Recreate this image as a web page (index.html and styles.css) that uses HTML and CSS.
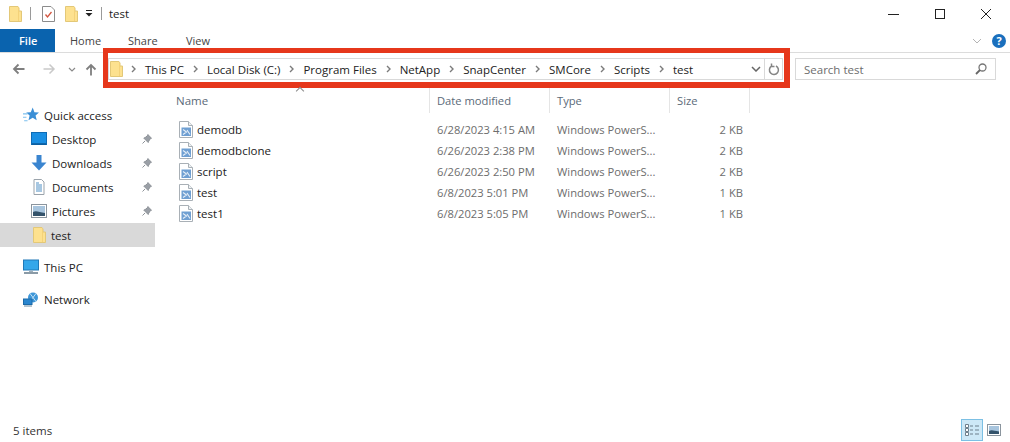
FILE: index.html
```html
<!DOCTYPE html>
<html lang="en">
<head>
<meta charset="utf-8">
<title>test</title>
<link rel="stylesheet" href="styles.css">
</head>
<body>
<svg class="defs" width="0" height="0" aria-hidden="true">
  <symbol id="folder" viewBox="0 0 13 16">
    <path d="M.5.5h8.500l1 1.500v3h2.500v10.500H.5z" fill="#fde18f" stroke="#e3c878"/>
    <path d="M9.500 1.500v13.500" stroke="#f4d27a" fill="none"/>
  </symbol>
  <symbol id="ps" viewBox="0 0 14 17">
    <path d="M.5.500h9l4 4v12H.5z" fill="#fff" stroke="#a9b0b6"/>
    <path d="M9.500.500v4h4" fill="#eef1f3" stroke="#a9b0b6"/>
    <rect x="2.500" y="6.500" width="9.500" height="8.500" fill="#6f9fd2"/>
    <path d="M4 8.500l3.500 2.500-3.500 2.500M8 9l3 4.500" fill="none" stroke="#e8f0f8" stroke-width="1.100"/>
  </symbol>
  <symbol id="pin" viewBox="0 0 10 10">
    <path d="M5.800.5l3.700 3.700-1.200.5-1.600 2.500-.5 1.300-4.400-4.400 1.300-.5 2.200-1.700zM3 7L.5 9.500" fill="#9a9fa6" stroke="#8d9298"/>
  </symbol>
  <symbol id="chev" viewBox="0 0 6 8">
    <path d="M1 1l3 3-3 3" fill="none" stroke="#7b7b7b" stroke-width="1.400"/>
  </symbol>
</svg>

<div class="window">
  <header class="titlebar">
    <svg class="qa-folder"><use href="#folder"/></svg>
    <span class="qa-sep"></span>
    <svg class="qa-doc" viewBox="0 0 13 16">
      <path d="M.5.500h8.500l3.500 3.500v11.500H.5z" fill="#fff" stroke="#8c8c8c"/>
      <path d="M3.500 8.500l2 2.500 4-5" fill="none" stroke="#d2553f" stroke-width="1.300"/>
    </svg>
    <svg class="qa-folder second"><use href="#folder"/></svg>
    <svg class="qa-drop" viewBox="0 0 8 7">
      <path d="M1 .5h6" stroke="#222" fill="none"/>
      <path d="M.5 3h7L4 6.500z" fill="#222"/>
    </svg>
    <span class="qa-sep last"></span>
    <span class="title-text">test</span>
    <div class="winctrls">
      <svg class="ctl" viewBox="0 0 12 12"><path d="M0 6.500h11" stroke="#222" fill="none"/></svg>
      <svg class="ctl" viewBox="0 0 12 12"><rect x="1.500" y="1.500" width="9" height="9" fill="none" stroke="#222"/></svg>
      <svg class="ctl" viewBox="0 0 12 12"><path d="M1 1l10 10M11 1L1 11" stroke="#222" fill="none"/></svg>
    </div>
  </header>

  <nav class="ribbon">
    <span class="tab tab-file">File</span>
    <span class="tab">Home</span>
    <span class="tab">Share</span>
    <span class="tab">View</span>
    <span class="ribbon-end">
      <svg class="rib-chev" viewBox="0 0 10 6"><path d="M1 1l4 4 4-4" fill="none" stroke="#b4b4b4"/></svg>
      <span class="help">?</span>
    </span>
  </nav>

  <div class="addressrow">
    <div class="navbtns">
      <svg class="arrow" viewBox="0 0 13 12"><path d="M12.500 6H2M6.500 1.500L2 6l4.500 4.500" fill="none" stroke="#7f7f7f" stroke-width="1.800"/></svg>
      <svg class="arrow fwd" viewBox="0 0 13 12"><path d="M.5 6H11M6.500 1.500L11 6l-4.500 4.500" fill="none" stroke="#c9c9c9" stroke-width="1.500"/></svg>
      <svg class="arrow-down" viewBox="0 0 8 5"><path d="M1 1l3 3 3-3" fill="none" stroke="#8a8a8a" stroke-width="1.200"/></svg>
      <svg class="arrow up" viewBox="0 0 12 13"><path d="M6 12.500V2M1.500 6.500L6 2l4.500 4.500" fill="none" stroke="#7f7f7f" stroke-width="1.800"/></svg>
    </div>
    <div class="addressbox">
      <svg class="crumb-folder"><use href="#folder"/></svg>
      <svg class="crumb-chev"><use href="#chev"/></svg><span class="crumb">This PC</span>
      <svg class="crumb-chev"><use href="#chev"/></svg><span class="crumb">Local Disk (C:)</span>
      <svg class="crumb-chev"><use href="#chev"/></svg><span class="crumb">Program Files</span>
      <svg class="crumb-chev"><use href="#chev"/></svg><span class="crumb">NetApp</span>
      <svg class="crumb-chev"><use href="#chev"/></svg><span class="crumb">SnapCenter</span>
      <svg class="crumb-chev"><use href="#chev"/></svg><span class="crumb">SMCore</span>
      <svg class="crumb-chev"><use href="#chev"/></svg><span class="crumb">Scripts</span>
      <svg class="crumb-chev"><use href="#chev"/></svg><span class="crumb">test</span>
      <span class="addr-end">
        <svg class="addr-drop" viewBox="0 0 10 6"><path d="M1 1l4 4 4-4" fill="none" stroke="#666" stroke-width="1.500"/></svg>
        <span class="addr-refresh">
          <svg viewBox="0 0 12 13"><path d="M8 3a4.500 4.500 0 1 1-4.500.2M3.500 .5v3h3" fill="none" stroke="#858585" stroke-width="1.500"/></svg>
        </span>
      </span>
    </div>
    <div class="searchbox">
      <span class="search-ph">Search test</span>
      <svg class="search-ic" viewBox="0 0 12 12"><circle cx="7.500" cy="4.500" r="3.500" fill="none" stroke="#777" stroke-width="1.300"/><path d="M5 7l-4 4" stroke="#666" stroke-width="1.800" fill="none"/></svg>
    </div>
    <div class="highlight"></div>
  </div>

  <main class="content">
    <aside class="sidebar">
      <div class="nav-item root first">
        <svg class="nav-ic star" viewBox="0 0 14 14"><path d="M8.500 .5l1.500 4 4 .3-3 2.700 1 4.200-3.500-2.200-3.700 2.200 1-4.200-3-2.700 4-.3z" fill="#3b8fd6"/><path d="M0 6h4M0 9h3M1 12h3" stroke="#7cc0ee"/></svg>
        <span>Quick access</span>
      </div>
      <div class="nav-item sub">
        <svg class="nav-ic" viewBox="0 0 16 14"><rect x=".5" y=".5" width="15" height="12" fill="#1a8fe3" stroke="#0f6cb5"/><path d="M1 12h14" stroke="#0b5a9a" stroke-width="1.500"/></svg>
        <span class="nav-label">Desktop</span>
        <svg class="pin"><use href="#pin"/></svg>
      </div>
      <div class="nav-item sub">
        <svg class="nav-ic" viewBox="0 0 16 16"><path d="M5.500 0h5v7.500h5L8 15.500.5 7.500h5z" fill="#3a85d0"/></svg>
        <span class="nav-label">Downloads</span>
        <svg class="pin"><use href="#pin"/></svg>
      </div>
      <div class="nav-item sub">
        <svg class="nav-ic" viewBox="0 0 16 16"><path d="M3 .5h7.500L13 3v12.500H3z" fill="#fff" stroke="#9aa3ab"/><path d="M5 4h3M5 6h6M5 8h6M5 10h6M5 12h6" stroke="#4e8fc4"/></svg>
        <span class="nav-label">Documents</span>
        <svg class="pin"><use href="#pin"/></svg>
      </div>
      <div class="nav-item sub">
        <svg class="nav-ic" viewBox="0 0 16 14"><rect x=".5" y=".5" width="15" height="13" fill="#fff" stroke="#8b959e"/><rect x="2" y="2" width="12" height="10" fill="#a8c5de"/><path d="M2 8c3-2 6 0 12 1v3H2z" fill="#34536b"/></svg>
        <span class="nav-label">Pictures</span>
        <svg class="pin"><use href="#pin"/></svg>
      </div>
      <div class="nav-item sub selected">
        <svg class="nav-ic folder-ic"><use href="#folder"/></svg>
        <span class="nav-label">test</span>
      </div>
      <div class="nav-item root spaced">
        <svg class="nav-ic" viewBox="0 0 16 15"><rect x=".5" y=".5" width="15" height="10" fill="#35a7ea" stroke="#2079b8"/><path d="M1 13.500h14" stroke="#8a9aa6" stroke-width="2"/><path d="M6 11h4v1.500H6z" fill="#9fb0bc"/></svg>
        <span>This PC</span>
      </div>
      <div class="nav-item root spaced">
        <svg class="nav-ic" viewBox="0 0 16 15"><circle cx="10" cy="6" r="5" fill="#3f97d8"/><path d="M7 2l6 8M13 2L7 10" stroke="#bfe0f5"/><rect x=".5" y="7.500" width="8.500" height="5.500" fill="#2a86cf" stroke="#1c6aa8"/><path d="M1 14.500h8" stroke="#6a8aa0"/></svg>
        <span>Network</span>
      </div>
    </aside>

    <section class="files">
      <div class="row header">
        <span class="cell name">Name</span>
        <span class="cell">Date modified</span>
        <span class="cell">Type</span>
        <span class="cell">Size</span>
        <span class="sort-caret"></span>
      </div>
      <div class="rows">
        <div class="row file">
          <span class="cell name"><svg class="file-ic"><use href="#ps"/></svg><span class="fname">demodb</span></span>
          <span class="cell">6/28/2023 4:15 AM</span>
          <span class="cell">Windows PowerS...</span>
          <span class="cell size">2 KB</span>
        </div>
        <div class="row file">
          <span class="cell name"><svg class="file-ic"><use href="#ps"/></svg><span class="fname">demodbclone</span></span>
          <span class="cell">6/26/2023 2:38 PM</span>
          <span class="cell">Windows PowerS...</span>
          <span class="cell size">2 KB</span>
        </div>
        <div class="row file">
          <span class="cell name"><svg class="file-ic"><use href="#ps"/></svg><span class="fname">script</span></span>
          <span class="cell">6/26/2023 2:50 PM</span>
          <span class="cell">Windows PowerS...</span>
          <span class="cell size">2 KB</span>
        </div>
        <div class="row file">
          <span class="cell name"><svg class="file-ic"><use href="#ps"/></svg><span class="fname">test</span></span>
          <span class="cell">6/8/2023 5:01 PM</span>
          <span class="cell">Windows PowerS...</span>
          <span class="cell size">1 KB</span>
        </div>
        <div class="row file">
          <span class="cell name"><svg class="file-ic"><use href="#ps"/></svg><span class="fname">test1</span></span>
          <span class="cell">6/8/2023 5:05 PM</span>
          <span class="cell">Windows PowerS...</span>
          <span class="cell size">1 KB</span>
        </div>
      </div>
    </section>
  </main>

  <footer class="statusbar">
    <span class="count">5 items</span>
    <span class="views">
      <span class="view-btn active">
        <svg viewBox="0 0 16 14"><path d="M1.500 1.500h3v3h-3zM1.500 5.500h3v3h-3zM1.500 9.500h3v3h-3z" fill="#fff" stroke="#6d7f8c"/><path d="M6 3h3M11 3h4M6 7h3M11 7h4M6 11h3M11 11h4" stroke="#6d7f8c"/></svg>
      </span>
      <span class="view-btn">
        <svg viewBox="0 0 14 12"><rect x=".5" y=".5" width="13" height="11" fill="#fff" stroke="#8b959e"/><rect x="2" y="2" width="10" height="8" fill="#a8c5de"/><path d="M2 7c3-1.500 5 0 10 .5V10H2z" fill="#34536b"/></svg>
      </span>
    </span>
  </footer>
</div>
</body>
</html>
```

FILE: styles.css
```css
* { box-sizing: border-box; }

html, body {
  margin: 0;
  height: 100%;
  background: #fff;
}

body {
  font-family: "Open Sans", "Noto Sans", sans-serif;
  font-size: 11.500px;
  color: #1c1c1c;
  overflow: hidden;
}

.defs { position: absolute; }

svg { display: block; flex: none; }

.window {
  width: 1010px;
  height: 442px;
  display: flex;
  flex-direction: column;
}

/* Title bar */
.titlebar {
  height: 29px;
  display: flex;
  align-items: center;
  padding: 0 0 2px 9px;
}
.qa-folder { width: 13px; height: 16px; }
.qa-folder.second { margin-left: 10px; }
.qa-sep { width: 1px; height: 13px; background: #9a9a9a; margin-left: 8px; }
.qa-sep.last { margin-left: 8px; }
.qa-doc { width: 13px; height: 16px; margin-left: 11px; }
.qa-drop { width: 8px; height: 7px; margin-left: 7px; }
.title-text { margin-left: 7px; color: #222; }
.winctrls {
  margin-left: auto;
  display: flex;
  gap: 34px;
  padding-right: 18px;
}
.ctl { width: 12px; height: 12px; }

/* Ribbon */
.ribbon {
  height: 24px;
  display: flex;
  align-items: stretch;
  border-bottom: 1px solid #dcdcdc;
  color: #444;
}
.tab {
  display: flex;
  align-items: center;
  padding-left: 15px;
  width: 58px;
  font-size: 11px;
}
.tab-file {
  width: 55px;
  padding-left: 19px;
  background: #0a63ae;
  color: #fff;
  font-weight: 600;
}
.ribbon-end {
  margin-left: auto;
  display: flex;
  align-items: center;
  gap: 10px;
  padding: 0 4px 0 0;
}
.rib-chev { width: 10px; height: 6px; }
.help {
  width: 14px;
  height: 14px;
  border-radius: 50%;
  background: #1a6fbd;
  color: #fff;
  font-size: 11px;
  font-weight: 700;
  line-height: 14px;
  text-align: center;
}

/* Address row */
.addressrow {
  position: relative;
  height: 35px;
  display: flex;
  align-items: center;
  padding-bottom: 3px;
}
.navbtns {
  width: 108px;
  display: flex;
  align-items: center;
  padding-left: 12px;
}
.arrow { width: 13px; height: 12px; }
.arrow.fwd { margin-left: 18px; }
.arrow-down { width: 8px; height: 5px; margin-left: 12px; }
.arrow.up { width: 12px; height: 13px; margin-left: 9px; }

.addressbox {
  width: 675px;
  height: 22px;
  display: flex;
  align-items: center;
  border: 1px solid #d9d9d9;
  padding-left: 1px;
}
.crumb-folder { width: 13px; height: 16px; }
.crumb-chev { width: 6px; height: 8px; margin: 0 8px; }
.crumb { color: #222; margin-right: 1px; }
.addr-end {
  margin-left: auto;
  display: flex;
  align-items: center;
  height: 100%;
}
.addr-drop { width: 10px; height: 6px; margin-right: 3px; }
.addr-refresh {
  width: 18px;
  height: 100%;
  border-left: 1px solid #d9d9d9;
  display: flex;
  align-items: center;
  justify-content: center;
}
.addr-refresh svg { width: 12px; height: 13px; }

.searchbox {
  width: 201px;
  height: 22px;
  margin-left: 12px;
  border: 1px solid #d9d9d9;
  display: flex;
  align-items: center;
  justify-content: space-between;
  padding: 0 8px;
  color: #6d6d6d;
}
.search-ic { width: 12px; height: 12px; }

/* red annotation drawn over the address bar */
.highlight {
  position: absolute;
  left: 103px;
  top: -5px;
  width: 687px;
  height: 40px;
  border: 5px solid #e6371b;
  border-bottom-width: 6px;
  border-right-width: 6px;
}

/* Main */
.content {
  flex: 1;
  display: flex;
  min-height: 0;
}

.sidebar {
  width: 155px;
  margin-right: 1px;
  padding-top: 15px;
  display: flex;
  flex-direction: column;
}
.nav-item {
  height: 24px;
  display: flex;
  align-items: center;
  color: #222;
}
.nav-item.root { padding-left: 23px; }
.nav-item.root .nav-ic { margin-right: 5px; }
.nav-item.spaced { margin-top: 8px; }
.nav-item.sub { padding-left: 31px; padding-right: 3px; }
.nav-item.sub .nav-ic { margin-right: 5px; }
.nav-ic { width: 16px; height: 16px; }
.nav-ic.folder-ic { width: 13px; height: 16px; margin-left: 2px; margin-right: 6px; }
.nav-label { flex: 1; }
.pin { width: 10px; height: 10px; }
.selected { background: #d9d9d9; }

.files {
  flex: 1;
  display: flex;
  flex-direction: column;
}
.row {
  display: grid;
  grid-template-columns: 274px 120px 120px 80px;
  font-size: 11.200px;
}
.row .name { font-size: 11.500px; }
.header {
  position: relative;
  height: 25px;
  color: #5b6a78;
}
.header .cell {
  display: flex;
  align-items: center;
  padding-left: 7px;
  border-right: 1px solid #e5e5e5;
}
.header .cell.name { padding-left: 20px; }
.sort-caret {
  position: absolute;
  left: 141px;
  top: 0;
  width: 6px;
  height: 6px;
  border-top: 1px solid #8a8a8a;
  border-left: 1px solid #8a8a8a;
  transform: rotate(45deg);
}
.rows { padding-top: 6px; }
.file { height: 21px; color: #6d6d6d; }
.file .cell { display: flex; align-items: center; padding-left: 7px; }
.file .cell.name { padding-left: 23px; color: #222; }
.file .cell.size { justify-content: flex-end; padding-right: 7px; }
.file-ic { width: 14px; height: 17px; margin-right: 4px; }

/* Status bar */
.statusbar {
  height: 24px;
  display: flex;
  align-items: center;
  justify-content: space-between;
  padding-left: 13px;
  padding-right: 9px;
  color: #333;
}
.views { display: flex; align-items: center; gap: 3px; }
.view-btn {
  width: 15px;
  height: 22px;
  display: flex;
  align-items: center;
  justify-content: center;
}
.view-btn svg { width: 14px; height: 12px; }
.view-btn.active {
  width: 22px;
  background: #cde8f7;
  border: 1px solid #7cc0e4;
}
.view-btn.active svg { width: 16px; height: 14px; }
```
